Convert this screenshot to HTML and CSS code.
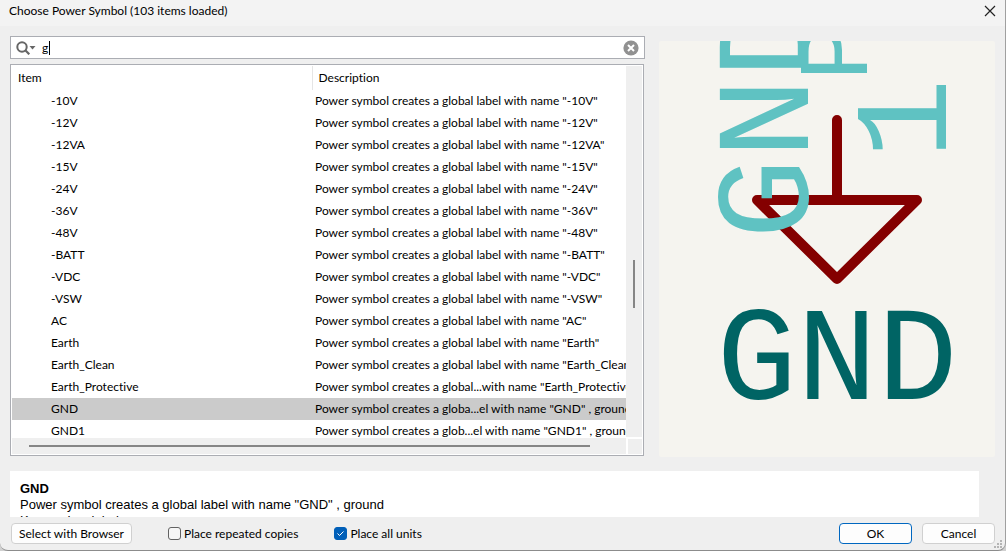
FILE: index.html
```html
<!DOCTYPE html>
<html lang="en">
<head>
<meta charset="utf-8">
<title>Choose Power Symbol</title>
<link rel="stylesheet" href="styles.css">
</head>
<body>
<div class="dialog">
  <header class="titlebar">
    <h1 class="title">Choose Power Symbol (103 items loaded)</h1>
    <button class="close" type="button" aria-label="Close">
      <svg width="12" height="12" viewBox="0 0 12 12"><path d="M1 1l10 10M11 1L1 11" fill="none" stroke="#222" stroke-width="1.2"/></svg>
    </button>
  </header>

  <main class="main">
    <section class="chooser">
      <div class="search">
        <button class="search-menu" type="button" aria-label="Search options">
          <svg width="20" height="14" viewBox="0 0 20 14"><circle cx="6" cy="6" r="4.7" fill="none" stroke="#666" stroke-width="2"/><path d="M9.3 9.3l4 4" stroke="#666" stroke-width="2.2"/><path d="M13.5 5h6l-3 3.4z" fill="#666"/></svg>
        </button>
        <div class="search-field">
          <input class="search-input" type="text" value="g" aria-label="Filter">
          <span class="caret"></span>
        </div>
        <button class="clear" type="button" aria-label="Clear">
          <svg width="16" height="16" viewBox="0 0 16 16"><circle cx="8" cy="8" r="7.6" fill="#919191"/><path d="M5 5l6 6M11 5l-6 6" stroke="#fff" stroke-width="2"/></svg>
        </button>
      </div>

      <div class="list">
        <div class="viewport">
          <table class="symbols">
            <colgroup><col class="col-item"><col></colgroup>
            <thead><tr><th>Item</th><th>Description</th></tr></thead>
            <tbody>
              <tr><td>-10V</td><td>Power symbol creates a global label with name "-10V"</td></tr>
              <tr><td>-12V</td><td>Power symbol creates a global label with name "-12V"</td></tr>
              <tr><td>-12VA</td><td>Power symbol creates a global label with name "-12VA"</td></tr>
              <tr><td>-15V</td><td>Power symbol creates a global label with name "-15V"</td></tr>
              <tr><td>-24V</td><td>Power symbol creates a global label with name "-24V"</td></tr>
              <tr><td>-36V</td><td>Power symbol creates a global label with name "-36V"</td></tr>
              <tr><td>-48V</td><td>Power symbol creates a global label with name "-48V"</td></tr>
              <tr><td>-BATT</td><td>Power symbol creates a global label with name "-BATT"</td></tr>
              <tr><td>-VDC</td><td>Power symbol creates a global label with name "-VDC"</td></tr>
              <tr><td>-VSW</td><td>Power symbol creates a global label with name "-VSW"</td></tr>
              <tr><td>AC</td><td>Power symbol creates a global label with name "AC"</td></tr>
              <tr><td>Earth</td><td>Power symbol creates a global label with name "Earth"</td></tr>
              <tr><td>Earth_Clean</td><td>Power symbol creates a global label with name "Earth_Clean"</td></tr>
              <tr><td>Earth_Protective</td><td>Power symbol creates a global...with name "Earth_Protective"</td></tr>
              <tr class="selected"><td>GND</td><td>Power symbol creates a globa...el with name "GND" , ground</td></tr>
              <tr><td>GND1</td><td>Power symbol creates a glob...el with name "GND1" , ground</td></tr>
            </tbody>
          </table>
        </div>
        <div class="vscroll"><div class="vthumb"></div></div>
        <div class="hscroll"><div class="hthumb"></div></div>
        <div class="corner"></div>
      </div>
    </section>

    <section class="preview">
      <svg class="canvas" viewBox="0 0 336 416" preserveAspectRatio="xMidYMin meet">
        <path class="symbol" d="M178 79V159M98 159H258L178 238Z"/>
        <g class="field">
          <text class="big" transform="translate(149 198) rotate(-90)">GND</text>
          <text class="small" transform="translate(208 40) rotate(-90)">P</text>
          <text class="big" transform="translate(287 118) rotate(-90)">1</text>
        </g>
        <text class="big value" x="178" y="358">GND</text>
      </svg>
    </section>
  </main>

  <section class="details">
    <h2 class="name">GND</h2>
    <p class="line">Power symbol creates a global label with name "GND" , ground</p>
    <p class="line">Keywords: global power</p>
  </section>

  <footer class="footer">
    <button class="btn browse" type="button">Select with Browser</button>
    <label class="check"><input class="box" type="checkbox">Place repeated copies</label>
    <label class="check"><input class="box" type="checkbox" checked>Place all units</label>
    <div class="actions">
      <button class="btn primary" type="button">OK</button>
      <button class="btn" type="button">Cancel</button>
    </div>
  </footer>
  <svg class="grip" width="8" height="8" viewBox="0 0 8 8"><path fill="#b4b4b4" d="M6 0h2v2H6zM3 3h2v2H3zM6 3h2v2H6zM0 6h2v2H0zM3 6h2v2H3zM6 6h2v2H6z"/></svg>
</div>
</body>
</html>
```
FILE: styles.css
```css
* { box-sizing: border-box; }

body {
  margin: 0;
  background: #d0d0d0;
  color: #000;
  font: 12px/16px Lato, "Noto Sans", sans-serif;
  font-variant-ligatures: none;
}

button, input { font: inherit; color: inherit; }

.dialog {
  position: relative;
  display: flex;
  flex-direction: column;
  height: 100vh;
  overflow: hidden;
  background: #efefef;
  border-right: 1px solid #a0a0a0;
  border-bottom: 1px solid #8c8c8c;
  border-radius: 0 0 8px 8px;
}

.titlebar {
  display: flex;
  align-items: center;
  justify-content: space-between;
  height: 26px;
  padding: 0 9px 4px;
  background: #f3f3f3;
}

.title { margin: 0; font-size: 12px; font-weight: 400; }

.close, .search-menu, .clear {
  display: flex;
  padding: 0;
  border: 0;
  background: none;
}

.main {
  display: grid;
  grid-template-columns: 635fr 336fr;
  gap: 14px;
  flex: 1;
  min-height: 0;
  padding: 10px 10px 0;
}

.chooser {
  display: flex;
  flex-direction: column;
  gap: 5px;
  min-width: 0;
  min-height: 0;
}

.search {
  display: flex;
  align-items: center;
  gap: 6px;
  height: 23px;
  padding: 0 5px;
  background: #fff;
  border: 1px solid #abadb3;
}

.search-field { position: relative; flex: 1; display: flex; }

.search-input {
  flex: 1;
  padding: 0;
  border: 0;
  outline: 0;
  background: none;
}

.caret {
  position: absolute;
  left: 7px;
  top: 1px;
  width: 1px;
  height: 14px;
  background: #000;
}

.list {
  display: grid;
  grid-template: 1fr 16px / 1fr 16px;
  flex: 1;
  min-height: 0;
  margin-right: 1px;
  padding: 1px;
  background: #fff;
  border: 1px solid #abadb3;
}

.viewport { min-width: 0; min-height: 0; overflow: hidden; }

.symbols {
  width: 100%;
  table-layout: fixed;
  border-collapse: collapse;
}

.col-item { width: 300px; }

.symbols th {
  height: 24px;
  padding: 0 6px;
  font-weight: 400;
  text-align: left;
}

.symbols th:first-child { border-right: 1px solid #e5e5e5; }

.symbols td {
  height: 22px;
  padding: 0 0 0 3px;
  white-space: nowrap;
  overflow: hidden;
}

.symbols td:first-child { padding-left: 39px; }

.selected { background: #cbcbcb; }

.vscroll, .hscroll, .corner { background: #efefef; }
.vscroll { margin-bottom: 1px; padding: 194px 7px 0; }
.vthumb { width: 2px; height: 48px; background: #868686; }
.hscroll { padding: 7px 36px 0 17px; }
.hthumb { height: 2px; background: #868686; }
.corner { margin: 1px 0 0 2px; }

.preview {
  margin: 5px 0 -1px;
  overflow: hidden;
  background: #f5f4ef;
  border-radius: 2px;
}

.canvas { display: block; width: 100%; height: 100%; }

.symbol {
  fill: none;
  stroke: #840000;
  stroke-width: 10;
  stroke-linecap: round;
  stroke-linejoin: round;
}

.field { fill: #5fc2c2; }

.canvas text { font-family: "Liberation Mono", monospace; }

.canvas .big { font-size: 134px; }
.canvas .small { font-size: 100px; }
.canvas .value { fill: #006464; text-anchor: middle; }

.details {
  height: 46px;
  margin: 15px 26px 0 10px;
  padding: 10px 10px 0;
  overflow: hidden;
  background: #fff;
  font: 13px/16px "Liberation Sans", Arial, sans-serif;
}

.name { margin: 0; font-size: 13px; }
.line { margin: 0; }

.footer {
  display: flex;
  align-items: center;
  height: 33px;
  padding: 0 10px 0 11px;
}

.btn {
  height: 21px;
  width: 73px;
  padding: 0;
  background: #fdfdfd;
  border: 1px solid #d0d0d0;
  border-radius: 4px;
  line-height: 19px;
}

.browse { width: 121px; margin-right: 36px; }
.primary { border-color: #0067c0; }

.check { display: flex; align-items: center; gap: 3px; margin-right: 36px; }

.box {
  appearance: none;
  width: 13px;
  height: 13px;
  margin: 0;
  background: #f6f6f6;
  border: 1px solid #626262;
  border-radius: 3px;
}

.box:checked {
  border-color: #005fb8;
  background: #005fb8 url("data:image/svg+xml,%3Csvg xmlns='http://www.w3.org/2000/svg' viewBox='0 0 11 11'%3E%3Cpath d='M2.5 5.5l2 2 4-4' fill='none' stroke='white'/%3E%3C/svg%3E") center / 11px no-repeat;
}

.actions { display: flex; gap: 10px; margin-left: auto; }

.grip { position: absolute; right: 3px; bottom: 2px; }
```
